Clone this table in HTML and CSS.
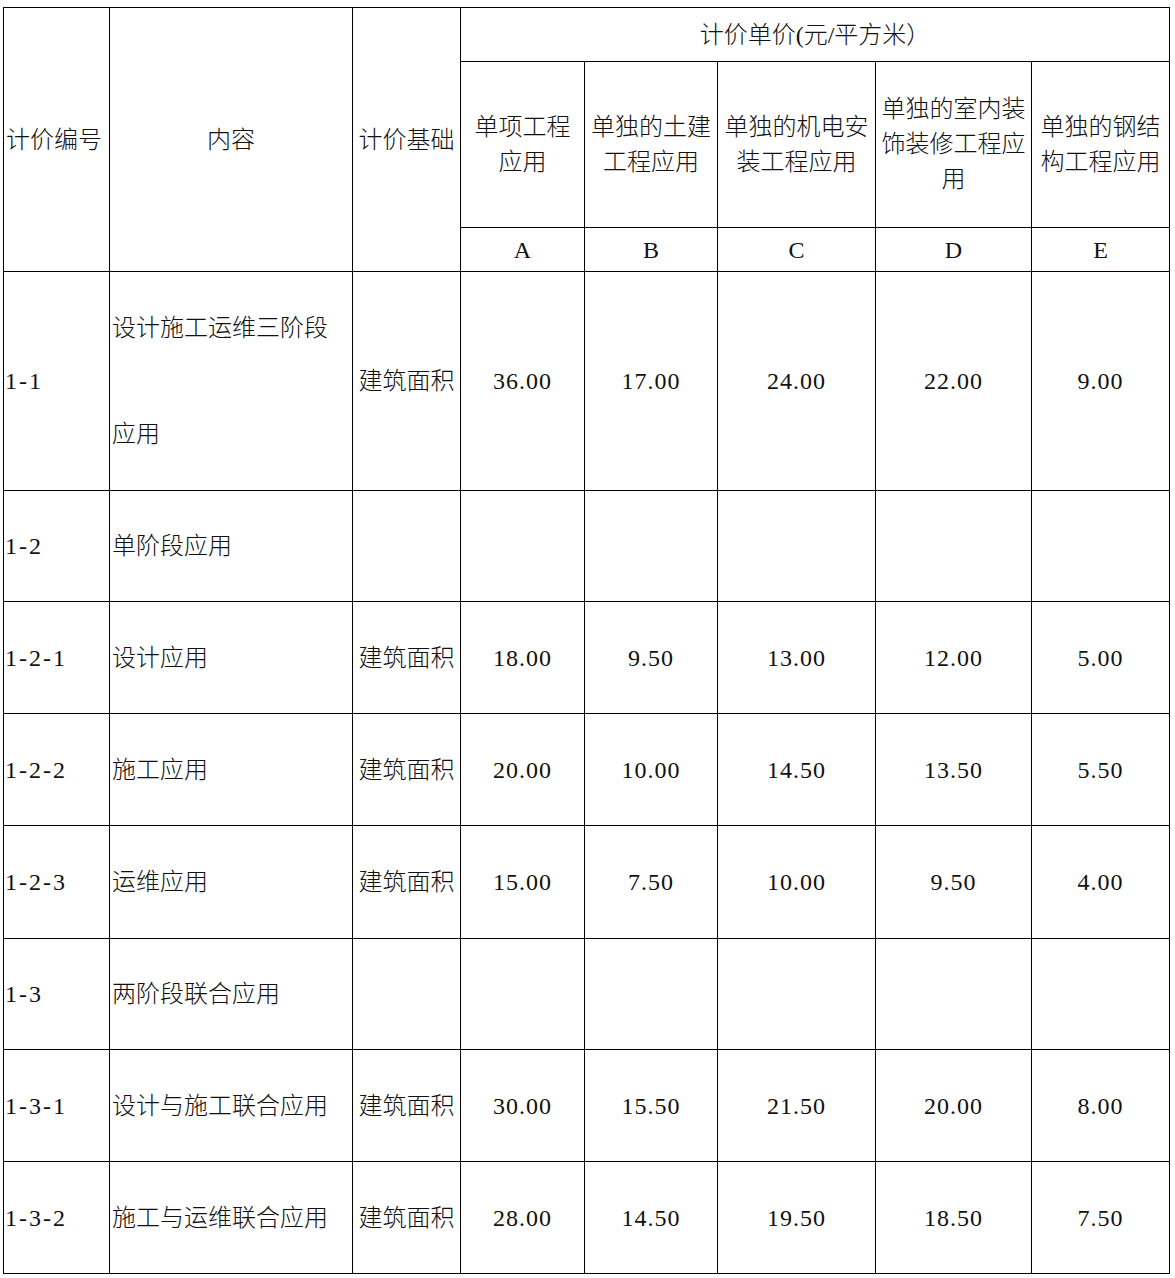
FILE: index.html
```html
<!DOCTYPE html>
<html lang="zh-CN">
<head>
<meta charset="utf-8">
<title>计价单价</title>
<link rel="stylesheet" href="styles.css">
</head>
<body>
<table class="price">
  <colgroup>
    <col class="c-code">
    <col class="c-content">
    <col class="c-basis">
    <col class="c-a">
    <col class="c-b">
    <col class="c-c">
    <col class="c-d">
    <col class="c-e">
  </colgroup>
  <tbody>
    <tr class="h1">
      <td rowspan="3" class="code-head">计价编号</td>
      <td rowspan="3" class="ctr">内容</td>
      <td rowspan="3" class="ctr">计价基础</td>
      <td colspan="5" class="ctr">计价单价(元/平方米）</td>
    </tr>
    <tr class="h2">
      <td class="ctr hd">单项工程<br>应用</td>
      <td class="ctr hd">单独的土建<br>工程应用</td>
      <td class="ctr hd">单独的机电安<br>装工程应用</td>
      <td class="ctr hd">单独的室内装<br>饰装修工程应<br>用</td>
      <td class="ctr hd">单独的钢结<br>构工程应用</td>
    </tr>
    <tr class="h3">
      <td class="ctr">A</td>
      <td class="ctr">B</td>
      <td class="ctr">C</td>
      <td class="ctr">D</td>
      <td class="ctr">E</td>
    </tr>
    <tr class="r-big">
      <td class="code">1-1</td>
      <td class="txt tall">设计施工运维三阶段<br>应用</td>
      <td class="ctr">建筑面积</td>
      <td class="num">36.00</td>
      <td class="num">17.00</td>
      <td class="num">24.00</td>
      <td class="num">22.00</td>
      <td class="num">9.00</td>
    </tr>
    <tr class="r111">
      <td class="code">1-2</td>
      <td class="txt">单阶段应用</td>
      <td></td><td></td><td></td><td></td><td></td><td></td>
    </tr>
    <tr class="r112">
      <td class="code">1-2-1</td>
      <td class="txt">设计应用</td>
      <td class="ctr">建筑面积</td>
      <td class="num">18.00</td>
      <td class="num">9.50</td>
      <td class="num">13.00</td>
      <td class="num">12.00</td>
      <td class="num">5.00</td>
    </tr>
    <tr class="r112">
      <td class="code">1-2-2</td>
      <td class="txt">施工应用</td>
      <td class="ctr">建筑面积</td>
      <td class="num">20.00</td>
      <td class="num">10.00</td>
      <td class="num">14.50</td>
      <td class="num">13.50</td>
      <td class="num">5.50</td>
    </tr>
    <tr class="r113">
      <td class="code">1-2-3</td>
      <td class="txt">运维应用</td>
      <td class="ctr">建筑面积</td>
      <td class="num">15.00</td>
      <td class="num">7.50</td>
      <td class="num">10.00</td>
      <td class="num">9.50</td>
      <td class="num">4.00</td>
    </tr>
    <tr class="r111">
      <td class="code">1-3</td>
      <td class="txt">两阶段联合应用</td>
      <td></td><td></td><td></td><td></td><td></td><td></td>
    </tr>
    <tr class="r112">
      <td class="code">1-3-1</td>
      <td class="txt">设计与施工联合应用</td>
      <td class="ctr">建筑面积</td>
      <td class="num">30.00</td>
      <td class="num">15.50</td>
      <td class="num">21.50</td>
      <td class="num">20.00</td>
      <td class="num">8.00</td>
    </tr>
    <tr class="r112">
      <td class="code">1-3-2</td>
      <td class="txt">施工与运维联合应用</td>
      <td class="ctr">建筑面积</td>
      <td class="num">28.00</td>
      <td class="num">14.50</td>
      <td class="num">19.50</td>
      <td class="num">18.50</td>
      <td class="num">7.50</td>
    </tr>
  </tbody>
</table>
</body>
</html>
```

FILE: styles.css
```css
html, body {
  margin: 0;
  padding: 0;
  background: #ffffff;
}

body {
  font-family: "Liberation Serif", "Noto Sans CJK SC", serif;
  font-size: 24px;
  font-weight: 300;
  color: #111111;
}

.price {
  margin: 7px 0 0 3px;
  border-collapse: collapse;
  table-layout: fixed;
  width: 1166px;
}

.c-code { width: 106px; }
.c-content { width: 243px; }
.c-basis { width: 108px; }
.c-a { width: 124px; }
.c-b { width: 133px; }
.c-c { width: 158px; }
.c-d { width: 156px; }
.c-e { width: 138px; }

.price td {
  border: 1px solid #000000;
  padding: 0 2px;
  vertical-align: middle;
  line-height: 30px;
  white-space: nowrap;
  overflow: hidden;
}

.h1 { height: 54px; }
.h2 { height: 166px; }
.h3 { height: 44px; }
.r-big { height: 219px; }
.r111 { height: 111px; }
.r112 { height: 112px; }
.r113 { height: 113px; }

.price td.ctr { text-align: center; padding: 0; }
.price td.code-head { text-align: left; padding-left: 2px; }
.price td.hd { line-height: 35px; }
.price td.code { text-align: left; padding-left: 1px; letter-spacing: 2px; }
.price td.txt { text-align: left; padding-left: 2px; letter-spacing: 0; }
.price td.tall { line-height: 106px; }
.price td.num { text-align: center; letter-spacing: 1px; padding: 0; }
```
